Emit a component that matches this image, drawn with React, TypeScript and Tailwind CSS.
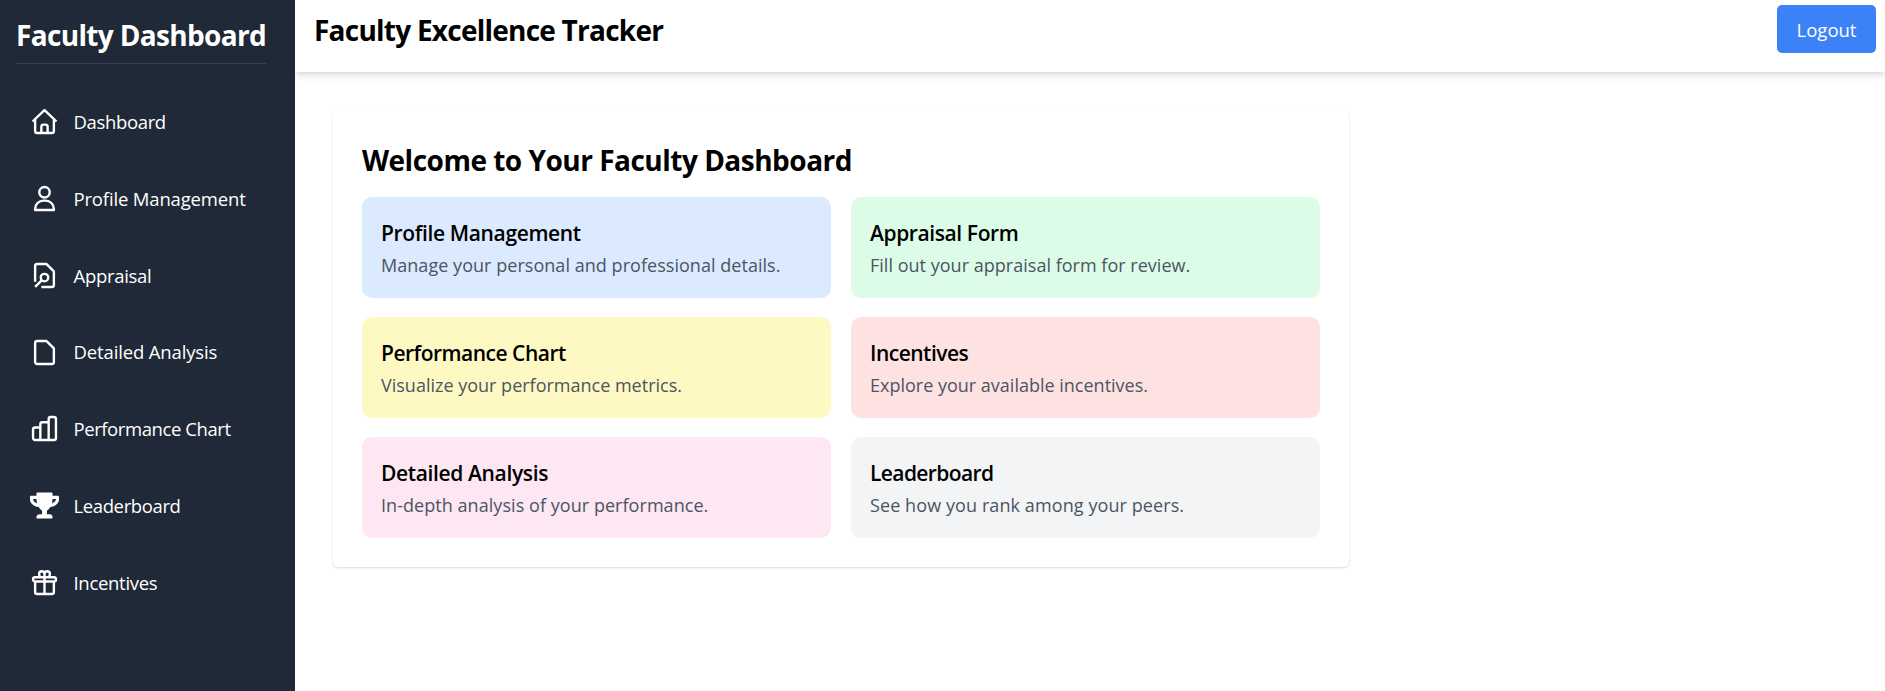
import type { ReactNode } from 'react';
import { FaTrophy } from 'react-icons/fa';

const Line = ({ children }: { children: ReactNode }) => (
  <svg viewBox="0 0 24 24" className="size-[25px] overflow-visible" fill="none" stroke="currentColor" strokeWidth="2.3" strokeLinejoin="round">
    {children}
  </svg>
);

const nav = [
  { label: 'Dashboard', tracking: 'tracking-[-0.35px]', icon: <Line><path d="M0.5 12 12 1l11.500 11M3 10v11a2 2 0 0 0 2 2h14a2 2 0 0 0 2-2V10M9 23v-6a2 2 0 0 1 2-2h2a2 2 0 0 1 2 2v6" /></Line> },
  { label: 'Profile Management', tracking: 'tracking-[-0.16px]', icon: <Line><circle cx="12" cy="6" r="5" /><path d="M3 23v-1a8 8 0 0 1 8-8h2a8 8 0 0 1 8 8v1Z" /></Line> },
  { label: 'Appraisal', tracking: 'tracking-[-0.3px]', icon: <Line><path d="M3 18V3a2 2 0 0 1 2-2h9l7 7v13a2 2 0 0 1-2 2H9M3 23l6.500-6.500" /><circle cx="12" cy="14" r="3.6" /></Line> },
  { label: 'Detailed Analysis', tracking: 'tracking-[-0.14px]', icon: <Line><path d="M3 3a2 2 0 0 1 2-2h9l7 7v13a2 2 0 0 1-2 2H5a2 2 0 0 1-2-2Z" /></Line> },
  { label: 'Performance Chart', tracking: 'tracking-[-0.42px]', icon: <Line><path d="M8 23H3a2 2 0 0 1-2-2v-8a2 2 0 0 1 2-2h5m8 12H8V8a2 2 0 0 1 2-2h6m0 17V3a2 2 0 0 1 2-2h3a2 2 0 0 1 2 2v18a2 2 0 0 1-2 2Z" /></Line> },
  { label: 'Leaderboard', tracking: 'tracking-[-0.38px]', icon: <FaTrophy className="size-[29px] shrink-0" /> },
  { label: 'Incentives', tracking: 'tracking-[-0.3px]', icon: <Line><path d="M3 11v10a2 2 0 0 0 2 2h14a2 2 0 0 0 2-2V11M3 7h18a2 2 0 0 1 2 2a2 2 0 0 1-2 2H3a2 2 0 0 1-2-2a2 2 0 0 1 2-2ZM12 4v19M12 7V3.800a2.600 2.600 0 0 0-5.200 0c0 1.200.4 2.200 1.200 3.200M12 7V3.800a2.600 2.600 0 0 1 5.200 0c0 1.200-.4 2.200-1.200 3.200" /></Line> },
];

const cards = [
  { title: 'Profile Management', text: 'Manage your personal and professional details.', color: 'bg-[#dbeafe]', tracking: 'tracking-[-0.36px]', body: 'tracking-[0.04px]' },
  { title: 'Appraisal Form', text: 'Fill out your appraisal form for review.', color: 'bg-[#dcfce7]', tracking: 'tracking-[-0.4px]', body: 'tracking-[0.02px]' },
  { title: 'Performance Chart', text: 'Visualize your performance metrics.', color: 'bg-[#fef9c3]', tracking: 'tracking-[-0.5px]', body: 'tracking-normal' },
  { title: 'Incentives', text: 'Explore your available incentives.', color: 'bg-[#fee2e2]', tracking: 'tracking-[-0.5px]', body: 'tracking-normal' },
  { title: 'Detailed Analysis', text: 'In-depth analysis of your performance.', color: 'bg-[#fce7f3]', tracking: 'tracking-[-0.36px]', body: 'tracking-[0.05px]' },
  { title: 'Leaderboard', text: 'See how you rank among your peers.', color: 'bg-[#f3f4f6]', tracking: 'tracking-[-0.6px]', body: 'tracking-[0.09px]' },
];

export default function App() {
  return (
    <div className="flex h-[691px] overflow-hidden bg-white font-['Open_Sans',sans-serif] text-black">
      <aside className="relative w-[295px] shrink-0 bg-[#1f2937] pl-4 text-white">
        <h2 className="mt-4 h-12 w-[250px] border-b border-[#374151] text-[28px] leading-[38px] font-bold tracking-[-0.66px] whitespace-nowrap">Faculty Dashboard</h2>
        <nav className="mt-[19.4px]">
          {nav.map(({ label, icon, tracking }) => (
            <a key={label} className="flex h-[76.8px] items-center">
              <span className="flex w-[57px] shrink-0 justify-center">{icon}</span>
              <span className={`pl-[0.5px] text-[18.5px] whitespace-nowrap ${tracking}`}>{label}</span>
            </a>
          ))}
        </nav>
      </aside>
      <div className="min-w-0 flex-1">
        <header className="flex h-[72px] items-start justify-between pr-[9px] pl-[19px] shadow-[0_4.8px_7.2px_-1.2px_rgba(0,0,0,0.1),0_2.4px_4.8px_-1.2px_rgba(0,0,0,0.1)]">
          <h1 className="mt-[11px] text-[28px] leading-[38px] font-bold tracking-[-0.76px]">Faculty Excellence Tracker</h1>
          <button className="mt-[5px] h-12 w-[99px] rounded-[5px] bg-[#3b82f6] pt-[2px] text-[18.5px] text-white">Logout</button>
        </header>
        <main className="mt-[39px] ml-[38px] h-[456px] w-[1016px] rounded-[5px] px-[29px] pt-[30px] shadow-[0_1px_3px_rgba(0,0,0,0.1),0_1px_2px_rgba(0,0,0,0.06)]">
          <h2 className="h-14 text-[28px] leading-[38px] font-bold tracking-[-0.5px]">Welcome to Your Faculty Dashboard</h2>
          <div className="grid grid-cols-2 gap-x-5 gap-y-[19px]">
            {cards.map((c) => (
              <section key={c.title} className={`h-[101px] rounded-[10px] px-[19px] pt-[19px] ${c.color}`}>
                <h3 className={`text-[21px] leading-[34px] font-semibold ${c.tracking}`}>{c.title}</h3>
                <p className={`text-[18px] leading-[31px] text-[#4b5563] ${c.body}`}>{c.text}</p>
              </section>
            ))}
          </div>
        </main>
      </div>
    </div>
  );
}
